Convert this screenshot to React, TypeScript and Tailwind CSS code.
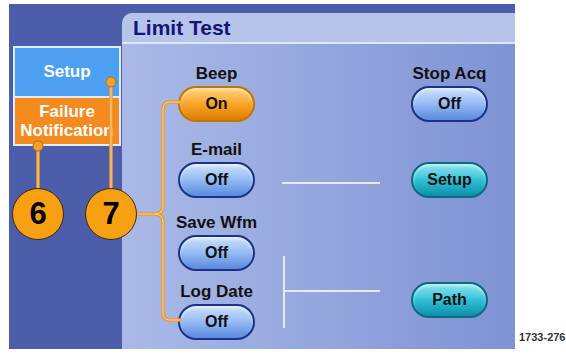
import type { ReactNode } from "react";

const font = { fontFamily: '"Liberation Sans", Arial, sans-serif' };

type Tone = "blue" | "orange" | "teal";

const toneClass: Record<Tone, string> = {
  blue: "border-[#1c3287] bg-gradient-to-b from-[#cfe2fd] via-[#94baf3] to-[#5a89de]",
  orange: "border-[#c87300] bg-gradient-to-b from-[#ffd47a] via-[#f8a523] to-[#dd7d00]",
  teal: "border-[#0b6a82] bg-gradient-to-b from-[#8ae6f0] via-[#2fc1d7] to-[#0a8fa9]",
};

function Pill({ tone, children }: { tone: Tone; children: ReactNode }) {
  return (
    <div
      className={`flex h-[36px] w-[77px] items-center justify-center rounded-full border-2 text-[16px] font-bold text-[#111] shadow-[inset_0_2px_3px_rgba(255,255,255,0.5)] ${toneClass[tone]}`}
    >
      {children}
    </div>
  );
}

function Group({ label, children, className = "" }: { label: string; children: ReactNode; className?: string }) {
  return (
    <div className={`flex flex-col items-center ${className}`}>
      <div className="h-[20px] whitespace-nowrap text-[17px] font-bold leading-[20px] text-[#111]">{label}</div>
      <div className="mt-[2px]">{children}</div>
    </div>
  );
}

function Callout({ n, className }: { n: string; className: string }) {
  return (
    <div
      className={`absolute flex h-[52px] w-[52px] items-center justify-center rounded-full border-[1.5px] border-[#3b2a12] bg-[#f7a014] text-[31px] font-bold text-black ${className}`}
    >
      {n}
    </div>
  );
}

export default function App() {
  return (
    <div className="relative flex h-[356px] w-[566px] bg-white" style={font}>
      <div className="ml-[9px] mt-[4px] flex h-[345px] w-[506px] bg-[#4c5ea9]">
        {/* left tabs */}
        <div className="w-[113px] pl-[4px] pt-[42px]">
          <div className="w-[108px] overflow-hidden border-2 border-[#e4ecfb]">
            <div className="flex h-[48px] items-center justify-center bg-[#4d9ff2] text-[17px] font-bold text-white">
              Setup
            </div>
            <div className="flex h-[48px] flex-col items-center justify-center border-t-2 border-[#e4ecfb] bg-[#f58a1f] text-[17px] font-bold leading-[19px] text-white">
              <span>Failure</span>
              <span className="whitespace-nowrap">Notification</span>
            </div>
          </div>
        </div>

        {/* panel */}
        <div className="mt-[9px] flex flex-1 flex-col overflow-hidden rounded-tl-[10px]">
          <div className="flex h-[29px] items-center bg-[#b7c4ea] pl-[11px] text-[21px] font-bold text-[#14157a]">
            Limit Test
          </div>
          <div className="h-[2px] bg-[#dfe6f8]" />
          <div className="flex flex-1 bg-gradient-to-r from-[#aab9e7] via-[#94a7de] to-[#7f92d4] pl-[56px] pr-[27px] pt-[20px]">
            <div className="flex w-[77px] flex-col">
              <Group label="Beep">
                <Pill tone="orange">On</Pill>
              </Group>
              <Group label="E-mail" className="mt-[18px]">
                <Pill tone="blue">Off</Pill>
              </Group>
              <Group label="Save Wfm" className="mt-[15px]">
                <Pill tone="blue">Off</Pill>
              </Group>
              <Group label="Log Date" className="mt-[11px]">
                <Pill tone="blue">Off</Pill>
              </Group>
            </div>
            <div className="ml-auto flex w-[77px] flex-col">
              <Group label="Stop Acq">
                <Pill tone="blue">Off</Pill>
              </Group>
              <div className="mt-[40px]">
                <Pill tone="teal">Setup</Pill>
              </div>
              <div className="mt-[84px]">
                <Pill tone="teal">Path</Pill>
              </div>
            </div>
          </div>
        </div>
      </div>

      <div className="mb-[13px] ml-[4px] self-end text-[11px] font-bold leading-none text-[#333]">1733-276</div>

      {/* connector drawing */}
      <svg className="pointer-events-none absolute left-0 top-0" width="566" height="356">
        <g stroke="#f0f4ff" strokeWidth="2" opacity="0.9">
          <line x1="282" y1="183" x2="380" y2="183" />
          <line x1="284" y1="256" x2="284" y2="328" />
          <line x1="284" y1="291" x2="380" y2="291" />
        </g>
        <g fill="none" strokeLinecap="round">
          <g stroke="#e99a30" strokeWidth="3.5">
            <line x1="38" y1="146" x2="38" y2="190" />
            <line x1="111" y1="82" x2="111" y2="190" />
            <path d="M180 102 H170 Q163 102 163 109 V206 Q163 214 155 214 H137 M155 214 Q163 214 163 222 V313 Q163 320 170 320 H180" />
          </g>
          <g stroke="#ffd38c" strokeWidth="1">
            <line x1="38" y1="146" x2="38" y2="190" />
            <line x1="111" y1="82" x2="111" y2="190" />
            <path d="M180 102 H170 Q163 102 163 109 V206 Q163 214 155 214 H137 M155 214 Q163 214 163 222 V313 Q163 320 170 320 H180" />
          </g>
        </g>
        <circle cx="38" cy="146" r="5" fill="#f4a12a" stroke="#b86e10" strokeWidth="1" />
        <circle cx="111" cy="82" r="5" fill="#f4a12a" stroke="#b86e10" strokeWidth="1" />
      </svg>

      <Callout n="6" className="left-[12px] top-[188px]" />
      <Callout n="7" className="left-[85px] top-[188px]" />
    </div>
  );
}
